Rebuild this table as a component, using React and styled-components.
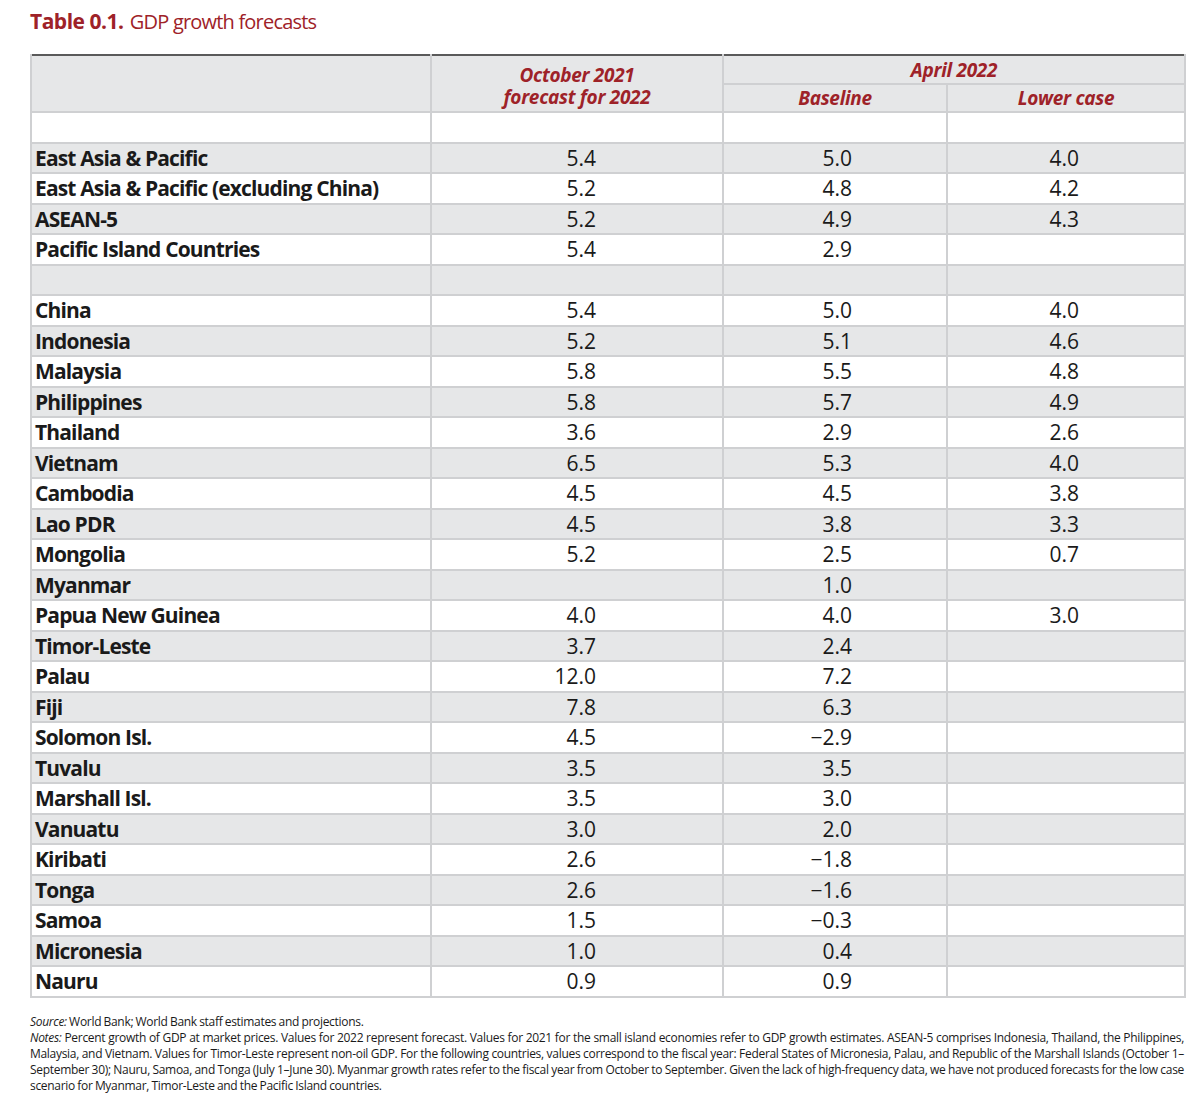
import React from "react";
import styled, { createGlobalStyle } from "styled-components";

const RED = "#9e2228";
const GRAY = "#e6e7e8";
const LINE = "#cfd0d2";

const rows = [
  ["East Asia & Pacific", "5.4", "5.0", "4.0"],
  ["East Asia & Pacific (excluding China)", "5.2", "4.8", "4.2"],
  ["ASEAN-5", "5.2", "4.9", "4.3"],
  ["Pacific Island Countries", "5.4", "2.9", ""],
  ["", "", "", ""],
  ["China", "5.4", "5.0", "4.0"],
  ["Indonesia", "5.2", "5.1", "4.6"],
  ["Malaysia", "5.8", "5.5", "4.8"],
  ["Philippines", "5.8", "5.7", "4.9"],
  ["Thailand", "3.6", "2.9", "2.6"],
  ["Vietnam", "6.5", "5.3", "4.0"],
  ["Cambodia", "4.5", "4.5", "3.8"],
  ["Lao PDR", "4.5", "3.8", "3.3"],
  ["Mongolia", "5.2", "2.5", "0.7"],
  ["Myanmar", "", "1.0", ""],
  ["Papua New Guinea", "4.0", "4.0", "3.0"],
  ["Timor-Leste", "3.7", "2.4", ""],
  ["Palau", "12.0", "7.2", ""],
  ["Fiji", "7.8", "6.3", ""],
  ["Solomon Isl.", "4.5", "\u22122.9", ""],
  ["Tuvalu", "3.5", "3.5", ""],
  ["Marshall Isl.", "3.5", "3.0", ""],
  ["Vanuatu", "3.0", "2.0", ""],
  ["Kiribati", "2.6", "\u22121.8", ""],
  ["Tonga", "2.6", "\u22121.6", ""],
  ["Samoa", "1.5", "\u22120.3", ""],
  ["Micronesia", "1.0", "0.4", ""],
  ["Nauru", "0.9", "0.9", ""],
];

const GlobalStyle = createGlobalStyle`
  body {
    margin: 0;
    background: #fff;
    font-family: "Open Sans", "Noto Sans", sans-serif;
    color: #1a1a1a;
  }
`;

const Page = styled.div`
  padding: 7px 16px 0 30px;
  width: 1154px;
`;

const Title = styled.h1`
  margin: 0 0 18px;
  font-size: 20px;
  font-weight: 400;
  color: ${RED};
  line-height: 28px;
  letter-spacing: -0.8px;

  b {
    font-size: 21px;
    font-weight: 700;
    letter-spacing: -0.5px;
    margin-right: 2px;
  }
`;

const Table = styled.table`
  width: 1154px;
  border-collapse: collapse;
  table-layout: fixed;
  border-top: 2px solid #5a5a5a;
  border-bottom: 2px solid #5a5a5a;
`;

const HeadCell = styled.th`
  background: ${GRAY};
  border: 2px solid ${LINE};
  border-top: none;
  color: ${RED};
  font-style: italic;
  font-weight: 700;
  font-size: 19px;
  letter-spacing: -0.3px;
  line-height: 22px;
  padding: ${({ $pad }) => $pad || "0"};
  height: ${({ $h }) => $h}px;
  vertical-align: ${({ $valign }) => $valign || "middle"};
  text-align: center;
`;

const Row = styled.tr`
  background: ${({ $shade }) => ($shade ? GRAY : "#fff")};
`;

const Cell = styled.td`
  border: 2px solid ${LINE};
  height: 28.5px;
  padding: 0 ${({ $right }) => $right || 0}px 0 ${({ $left }) => $left || 0}px;
  text-align: ${({ $align }) => $align || "right"};
  font-size: 21px;
  font-weight: ${({ $bold }) => ($bold ? 700 : 400)};
  letter-spacing: ${({ $bold }) => ($bold ? "-0.85px" : "0")};
  line-height: 26px;
  white-space: nowrap;
`;

const Notes = styled.div`
  margin-top: 16px;
  font-size: 12px;
  letter-spacing: -0.3px;
  word-spacing: -0.5px;
  line-height: 16px;
  color: #1a1a1a;
  text-align: justify;

  p {
    margin: 0;
  }

  i {
    font-style: italic;
  }
`;

export default function App() {
  return (
    <>
      <GlobalStyle />
      <Page>
        <Title>
          <b>Table 0.1.</b> GDP growth forecasts
        </Title>
        <Table>
          <colgroup>
            <col style={{ width: 400 }} />
            <col style={{ width: 292 }} />
            <col style={{ width: 224 }} />
            <col style={{ width: 238 }} />
          </colgroup>
          <thead>
            <tr>
              <HeadCell rowSpan={2} $h={27} />
              <HeadCell rowSpan={2} $h={27} $valign="bottom" $pad="0 0 3px">
                October 2021
                <br />
                forecast for 2022
              </HeadCell>
              <HeadCell colSpan={2} $h={27}>
                April 2022
              </HeadCell>
            </tr>
            <tr>
              <HeadCell $h={26}>Baseline</HeadCell>
              <HeadCell $h={26}>Lower case</HeadCell>
            </tr>
          </thead>
          <tbody>
            <Row>
              <Cell />
              <Cell />
              <Cell />
              <Cell />
            </Row>
            {rows.map(([name, oct, base, low], i) => (
              <Row key={i} $shade={i % 2 === 0}>
                <Cell $bold $align="left" $left={3}>
                  {name}
                </Cell>
                <Cell $right={126}>{oct}</Cell>
                <Cell $right={94}>{base}</Cell>
                <Cell $right={105}>{low}</Cell>
              </Row>
            ))}
          </tbody>
        </Table>
        <Notes>
          <p>
            <i>Source:</i> World Bank; World Bank staff estimates and projections.
          </p>
          <p>
            <i>Notes:</i> Percent growth of GDP at market prices. Values for 2022 represent forecast. Values for 2021 for the small island economies refer to GDP growth estimates. ASEAN-5 comprises Indonesia, Thailand, the Philippines, Malaysia, and Vietnam. Values for Timor-Leste represent non-oil GDP. For the following countries, values correspond to the fiscal year: Federal States of Micronesia, Palau, and Republic of the Marshall Islands (October 1&ndash;September 30); Nauru, Samoa, and Tonga (July 1&ndash;June 30). Myanmar growth rates refer to the fiscal year from October to September. Given the lack of high-frequency data, we have not produced forecasts for the low case scenario for Myanmar, Timor-Leste and the Pacific Island countries.
          </p>
        </Notes>
      </Page>
    </>
  );
}
